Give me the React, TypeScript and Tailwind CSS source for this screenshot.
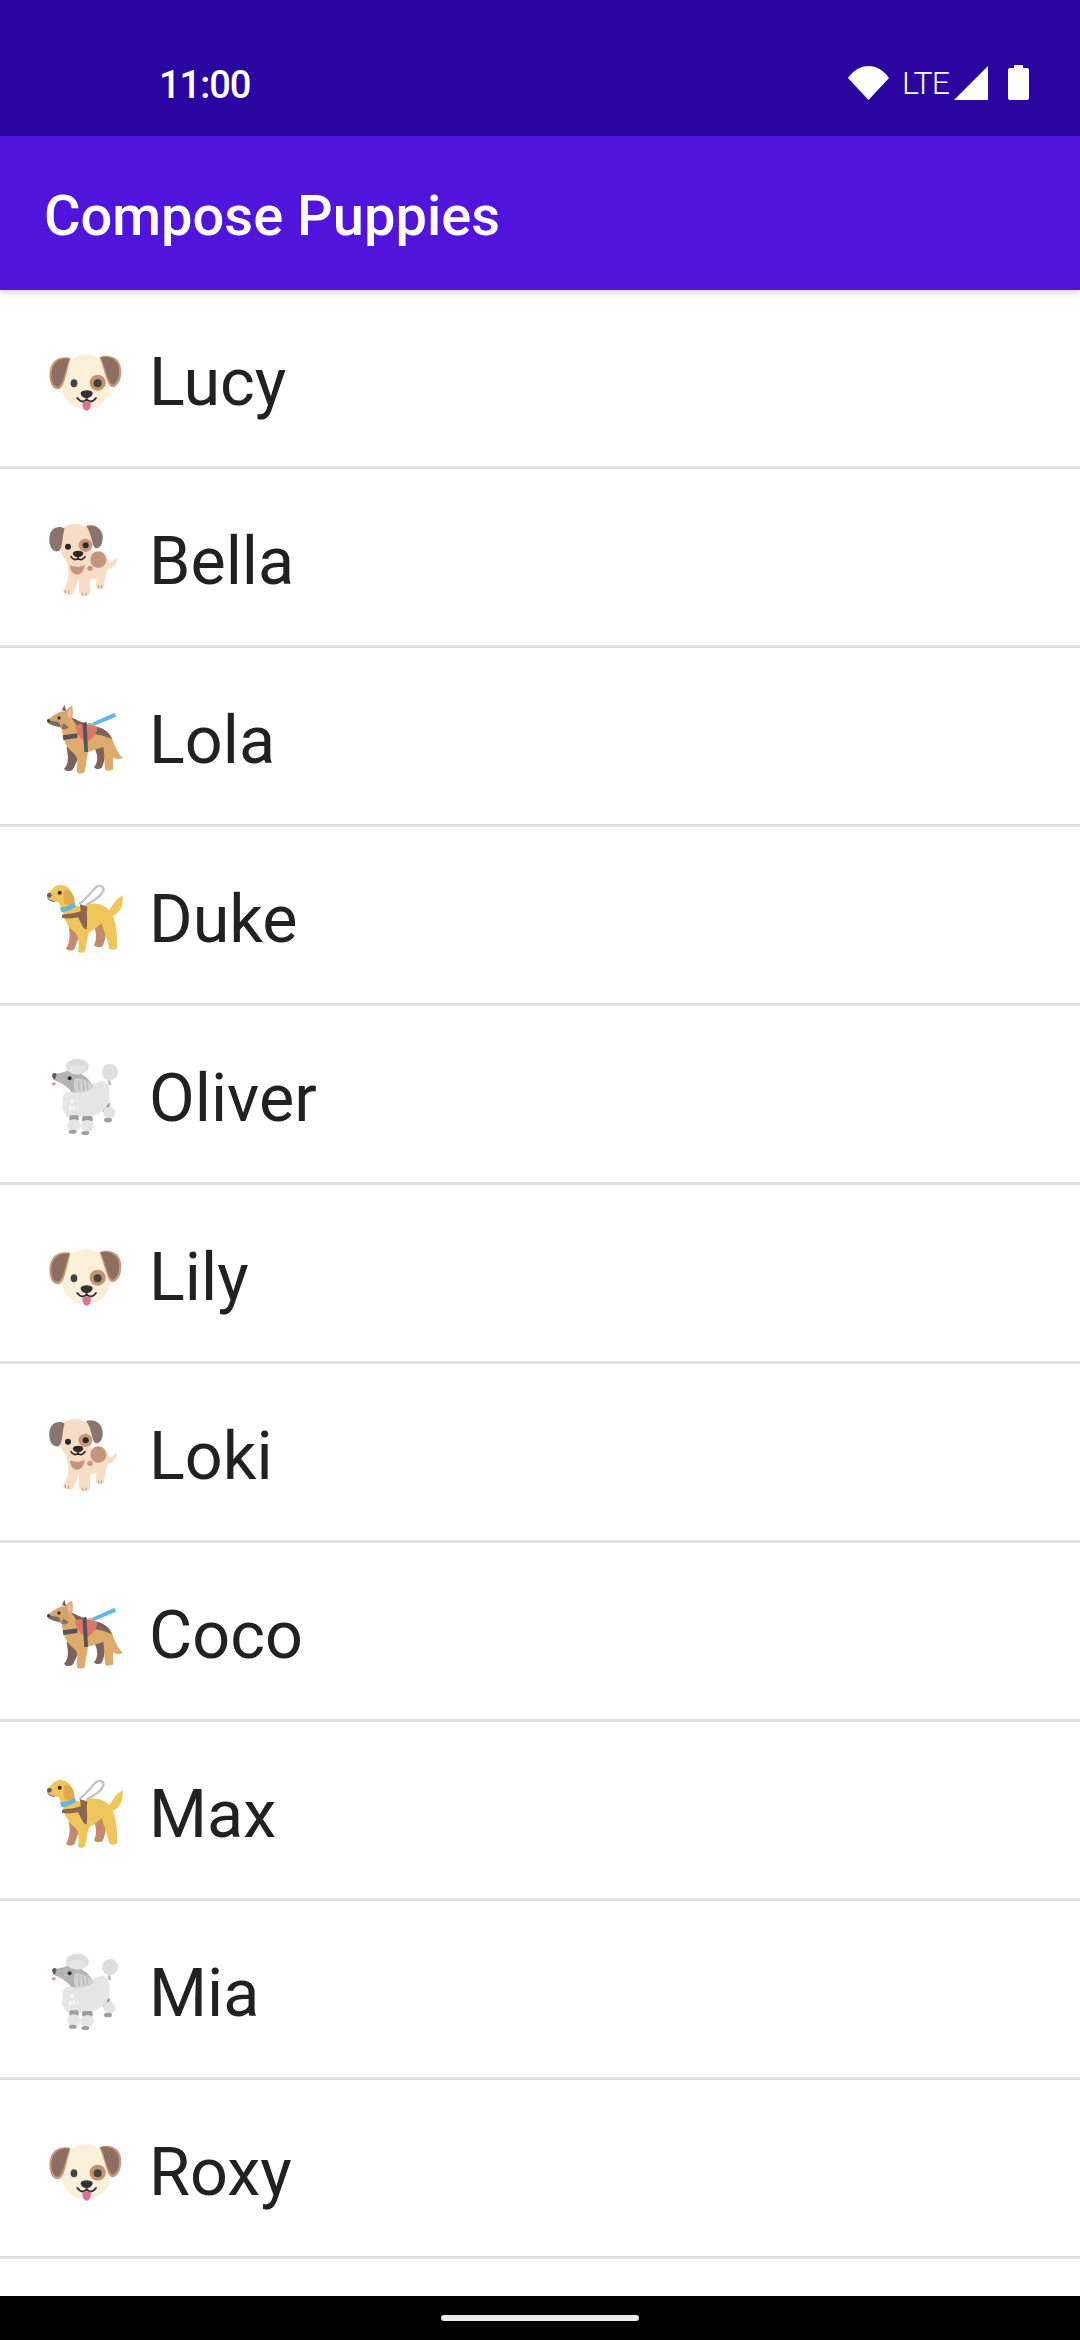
import React from 'react';

const ROBOTO = "font-['Roboto',sans-serif]";

// Emoji drawings, coordinates are 3x of the picture
const FaceDog = () => (
  <svg viewBox="0 -6 330 300" className="w-[110px] h-[100px] shrink-0">
    <ellipse cx="168" cy="156" rx="76" ry="83" fill="#FAEFD9" />
    <path d="M122 84 C95 76 66 88 60 118 C54 150 64 178 84 178 C104 176 108 130 122 84Z" fill="#C9987A" />
    <path d="M118 86 C95 82 72 92 66 120 C61 146 68 170 84 170 C98 168 104 128 118 86Z" fill="#8D6E63" />
    <path d="M208 82 C232 70 266 80 272 108 C278 140 268 168 248 172 C230 170 226 122 208 82Z" fill="#C9987A" />
    <path d="M212 82 C234 76 260 86 266 110 C271 136 262 160 248 164 C234 160 228 120 212 82Z" fill="#8D6E63" />
    <circle cx="203" cy="158" r="24" fill="#C6926C" />
    <circle cx="203" cy="160" r="12" fill="#424242" />
    <ellipse cx="132" cy="160" rx="10" ry="12" fill="#424242" />
    <path d="M152 188 C154 178 186 178 188 188 C188 198 178 204 170 205 C160 204 152 198 152 188Z" fill="#333" />
    <path d="M142 204 C152 218 164 216 170 208 C176 216 188 218 198 204" fill="none" stroke="#333" strokeWidth="6" strokeLinecap="round" />
    <path d="M158 216 C164 214 176 214 182 216 C184 232 178 242 170 242 C162 242 156 232 158 216Z" fill="#D9719A" />
  </svg>
);

const PuppyDog = () => (
  <svg viewBox="0 -9 330 300" className="w-[110px] h-[100px] shrink-0">
    <path d="M228 160 C244 160 252 150 262 142 C262 160 250 176 230 178Z" fill="#F7DDC6" />
    <path d="M108 150 C120 190 118 210 100 240 C98 252 118 258 128 252 C136 240 142 220 146 205 C148 220 146 240 148 250 C152 262 176 262 180 250 C182 235 178 220 180 208 L200 205 C198 215 196 230 198 234 C206 242 220 240 222 232 C222 218 226 200 234 176 C240 160 236 146 226 136 C200 118 150 130 108 150Z" fill="#F7DDC6" />
    <ellipse cx="136" cy="94" rx="56" ry="52" fill="#F7DDC6" />
    <ellipse cx="138" cy="122" rx="44" ry="36" fill="#F7DDC6" />
    <path d="M84 52 C66 52 56 72 58 94 C60 118 72 126 84 124 C100 118 96 76 104 56 C98 52 92 50 84 52Z" fill="#8A7470" />
    <path d="M168 48 C190 40 216 52 218 80 C220 102 208 118 196 114 C186 110 186 70 168 48Z" fill="#8A7470" />
    <circle cx="166" cy="106" r="20" fill="#C4967E" />
    <circle cx="167" cy="106" r="9" fill="#2E2724" />
    <circle cx="114" cy="110" r="9" fill="#2E2724" />
    <path d="M128 130 C132 120 158 120 160 130 C158 140 150 142 144 142 C136 142 130 138 128 130Z" fill="#2E2724" />
    <path d="M123 140 C130 152 140 150 144 144 C150 152 158 150 165 140" fill="none" stroke="#2E2724" strokeWidth="5" strokeLinecap="round" />
    <path d="M120 166 C134 172 150 172 164 164 C162 184 152 194 140 194 C128 192 120 182 120 166Z" fill="#C4967E" />
    <ellipse cx="205" cy="149" rx="24" ry="25" fill="#C4967E" />
    <circle cx="180" cy="175" r="8" fill="#C4967E" />
    <path d="M106 240 v9 M116 242 v9 M158 248 v9 M168 248 v9 M206 226 v8 M214 226 v8" stroke="#C4967E" strokeWidth="3" />
  </svg>
);

const ShepherdDog = () => (
  <svg viewBox="0 -12 330 300" className="w-[110px] h-[100px] shrink-0">
    <path d="M178 102 L254 68 L258 80 L182 112Z" fill="#5DB8EC" />
    <path d="M172 100 L192 98 L190 110 L176 112Z" fill="#B8B8B8" />
    <path d="M110 170 C114 200 118 220 102 236 C108 246 126 244 130 236 C138 220 146 204 152 184Z" fill="#7D635A" />
    <path d="M192 170 C204 196 206 214 192 232 C198 240 212 238 216 232 C224 212 228 192 226 168Z" fill="#7D635A" />
    <path d="M232 130 C252 150 258 190 280 204 C262 210 246 206 238 190Z" fill="#DFAB6D" />
    <path d="M94 112 C98 140 104 166 124 184 C136 194 142 200 142 214 C142 228 138 240 142 248 C148 253 160 251 164 246 C168 226 170 206 174 186 C188 180 204 176 220 170 C224 192 222 218 226 240 C232 244 246 242 250 238 C246 210 256 176 248 150 C240 124 210 108 184 110 C166 102 150 94 128 84Z" fill="#DFAB6D" />
    <path d="M118 84 C134 86 140 112 150 124 C170 132 210 130 246 148 C238 124 210 106 184 110 C166 102 150 94 128 84Z" fill="#7D635A" />
    <path d="M96 60 L103 44 L110 66Z" fill="#7D635A" />
    <path d="M104 66 C110 58 118 50 126 48 C130 62 130 80 122 98 L106 90Z" fill="#DFAB6D" />
    <path d="M109 78 C112 68 116 60 122 56 C125 66 124 74 119 84Z" fill="#F4B8B0" />
    <path d="M52 90 C68 80 86 62 102 64 C116 70 122 90 116 112 C106 122 96 120 90 112 C78 108 60 106 52 96Z" fill="#D4A66E" />
    <path d="M52 90 C64 94 76 94 84 96 C90 100 92 106 92 112 C78 108 60 106 52 96Z" fill="#7D6A5E" />
    <path d="M100 100 C106 106 112 108 116 112 C108 120 100 120 94 114Z" fill="#8A6F5C" />
    <circle cx="56" cy="92" r="5" fill="#424242" />
    <circle cx="87" cy="84" r="5" fill="#333" />
    <path d="M136 106 C156 98 178 102 202 110 C202 126 190 144 172 156 C150 150 138 130 136 106Z" fill="#E0766A" />
    <path d="M98 136 L142 130 L142 144 L100 150Z" fill="#555" />
    <path d="M157 98 L170 96 L174 186 L163 186Z" fill="#555" />
  </svg>
);

const GuideDog = () => (
  <svg viewBox="0 -15 330 300" className="w-[110px] h-[100px] shrink-0">
    <path d="M116 170 C122 195 118 220 108 236 C114 244 130 242 134 236 C140 216 148 200 156 180Z" fill="#C28A6E" />
    <path d="M188 160 C200 186 202 206 192 226 C198 234 214 232 218 228 C228 206 230 184 224 160Z" fill="#C28A6E" />
    <path d="M232 126 C246 116 250 90 278 76 C280 104 272 130 246 138Z" fill="#EFC65C" />
    <path d="M96 108 C98 140 110 170 136 188 C146 198 148 224 144 244 C150 251 162 249 166 243 C170 220 172 200 178 186 C192 180 204 170 214 160 C222 180 232 210 238 236 C246 241 258 239 262 234 C260 200 262 170 248 136 C236 108 200 94 170 104 C150 112 130 110 122 96Z" fill="#EFC65C" />
    <path d="M52 72 C62 64 68 52 84 46 C104 42 122 54 128 74 C132 94 128 108 112 114 C100 120 92 116 86 96 C74 96 60 92 52 84Z" fill="#EFC65C" />
    <path d="M104 60 C120 58 134 76 134 92 C130 106 114 108 104 102 C98 88 100 72 104 60Z" fill="#DFA94F" />
    <circle cx="58" cy="76" r="7" fill="#5C5C5C" />
    <circle cx="89" cy="68" r="6" fill="#2E2A26" />
    <path d="M52 84 C60 92 66 94 74 94" fill="none" stroke="#5C5C5C" strokeWidth="3" />
    <path d="M90 112 C108 112 122 106 134 96 L138 110 C124 120 108 126 94 126Z" fill="#63B5DC" />
    <path d="M96 134 C116 132 134 130 152 124 L150 102 L172 110 C168 132 174 150 170 178 C160 180 154 160 144 142 C130 146 110 146 96 144Z" fill="#8D6650" />
    <path d="M150 100 C170 86 186 62 200 50 C212 44 223 50 220 62 C214 76 192 92 172 102" fill="none" stroke="#C4C4C4" strokeWidth="7" strokeLinecap="round" />
  </svg>
);

const PoodleDog = () => (
  <svg viewBox="0 -18 330 300" className="w-[110px] h-[100px] shrink-0">
    <path d="M212 170 L240 158 L238 180 L220 186Z" fill="#9E9E9E" />
    <ellipse cx="238" cy="188" rx="18" ry="18" fill="#E4E4E4" />
    <ellipse cx="234" cy="210" rx="12" ry="7" fill="#9E9E9E" />
    <path d="M232 92 L240 90 L244 104 L236 106Z" fill="#BDBDBD" />
    <circle cx="240" cy="66" r="24" fill="#DEDEDE" />
    <path d="M118 126 C150 120 190 100 216 92 C236 96 242 120 238 146 C234 176 214 190 188 198 L120 204 C104 200 96 180 98 152 C100 138 106 130 118 126Z" fill="#E6E6E6" />
    <circle cx="118" cy="145" r="20" fill="#E6E6E6" />
    <circle cx="116" cy="172" r="20" fill="#E6E6E6" />
    <path d="M122 148 h7 v12 h-7Z M118 168 h6 v12 h-6Z M128 166 h6 v14 h-6Z M140 168 h5 v12 h-5Z" fill="#FAFAFA" />
    <rect x="118" y="196" width="28" height="18" rx="6" fill="#9E9E9E" />
    <rect x="156" y="198" width="32" height="18" rx="6" fill="#9E9E9E" />
    <ellipse cx="132" cy="226" rx="20" ry="18" fill="#E6E6E6" />
    <ellipse cx="172" cy="228" rx="20" ry="18" fill="#E6E6E6" />
    <ellipse cx="128" cy="245" rx="12" ry="6" fill="#9E9E9E" />
    <ellipse cx="166" cy="249" rx="12" ry="6" fill="#9E9E9E" />
    <path d="M66 74 C84 70 100 68 112 62 C140 62 176 76 190 112 C172 128 140 128 124 126 C112 110 96 100 72 90 C68 86 66 80 66 74Z" fill="#B4B4B4" />
    <path d="M136 84 C160 86 182 96 190 112 C178 124 156 130 138 128 C130 116 130 96 136 84Z" fill="#D2D2D2" />
    <path d="M146 92 L148 122 M158 92 L162 122 M170 96 L174 120" stroke="#A4A4A4" strokeWidth="2" />
    <path d="M66 74 C70 68 76 68 80 72 L76 86 L70 88Z" fill="#5F5F5F" />
    <circle cx="119" cy="85" r="6" fill="#2F2F2F" />
    <path d="M64 100 C70 94 78 96 78 102 C74 108 66 110 64 100Z" fill="#EE92AE" />
    <ellipse cx="142" cy="50" rx="34" ry="24" fill="#DCDCDC" />
    <ellipse cx="142" cy="58" rx="28" ry="14" fill="#E4E4E4" />
  </svg>
);

const DOGS = [FaceDog, PuppyDog, ShepherdDog, GuideDog, PoodleDog];
const NAMES = ['Lucy', 'Bella', 'Lola', 'Duke', 'Oliver', 'Lily', 'Loki', 'Coco', 'Max', 'Mia', 'Roxy'];

const StatusIcons = () => (
  <div className="flex items-center">
    <svg viewBox="0 0 41 34" className="w-[41px] h-[34px]" fill="#fff">
      <path d="M0 12 C11 -4 30 -4 41 12 L20.5 34Z" />
    </svg>
    <span className={`${ROBOTO} ml-[13px] w-[45px] text-[32px] leading-none text-white font-light tracking-[-1px]`}>LTE</span>
    <svg viewBox="0 0 34 34" className="ml-[7px] w-[34px] h-[34px]" fill="#fff">
      <path d="M34 0 V34 H0Z" />
    </svg>
    <svg viewBox="0 0 21 35" className="ml-[20px] w-[21px] h-[35px]" fill="#fff">
      <path d="M6 3 V1 a1 1 0 0 1 1-1 h7 a1 1 0 0 1 1 1 V3 h4 a2 2 0 0 1 2 2 V33 a2 2 0 0 1-2 2 H2 a2 2 0 0 1-2-2 V5 a2 2 0 0 1 2-2Z" />
    </svg>
  </div>
);

const App = () => {
  return (
    <div className={`flex flex-col h-[2340px] w-[1080px] overflow-hidden bg-white ${ROBOTO}`}>
      <div className="h-[136px] shrink-0 bg-[#2B05A0] flex items-start justify-between pl-[159px] pr-[51px] pt-[65px]">
        <span className="text-[38px] leading-[40px] font-medium text-white tracking-[-1px]">11:00</span>
        <StatusIcons />
      </div>
      <header className="relative z-10 h-[154px] shrink-0 bg-[#5014DC] flex items-center px-[44px] shadow-[0_3px_6px_rgba(0,0,0,0.16)]">
        <h1 className="pt-[6px] text-[56px] leading-none font-medium text-white">Compose Puppies</h1>
      </header>
      <main className="flex-1 overflow-hidden">
        {NAMES.map((name, i) => {
          const Dog = DOGS[i % DOGS.length];
          return (
            <div key={name} className="h-[179px] border-b-[3px] border-[#E0E0E0] flex items-center pl-[30px]">
              <Dog />
              <span className="ml-[9px] pt-[8px] text-[66.5px] leading-none text-[#212121]">{name}</span>
            </div>
          );
        })}
      </main>
      <div className="h-[44px] shrink-0 bg-black flex items-center justify-center">
        <div className="w-[198px] h-[6px] rounded-full bg-[#EAEAEA]" />
      </div>
    </div>
  );
};

export default App;
